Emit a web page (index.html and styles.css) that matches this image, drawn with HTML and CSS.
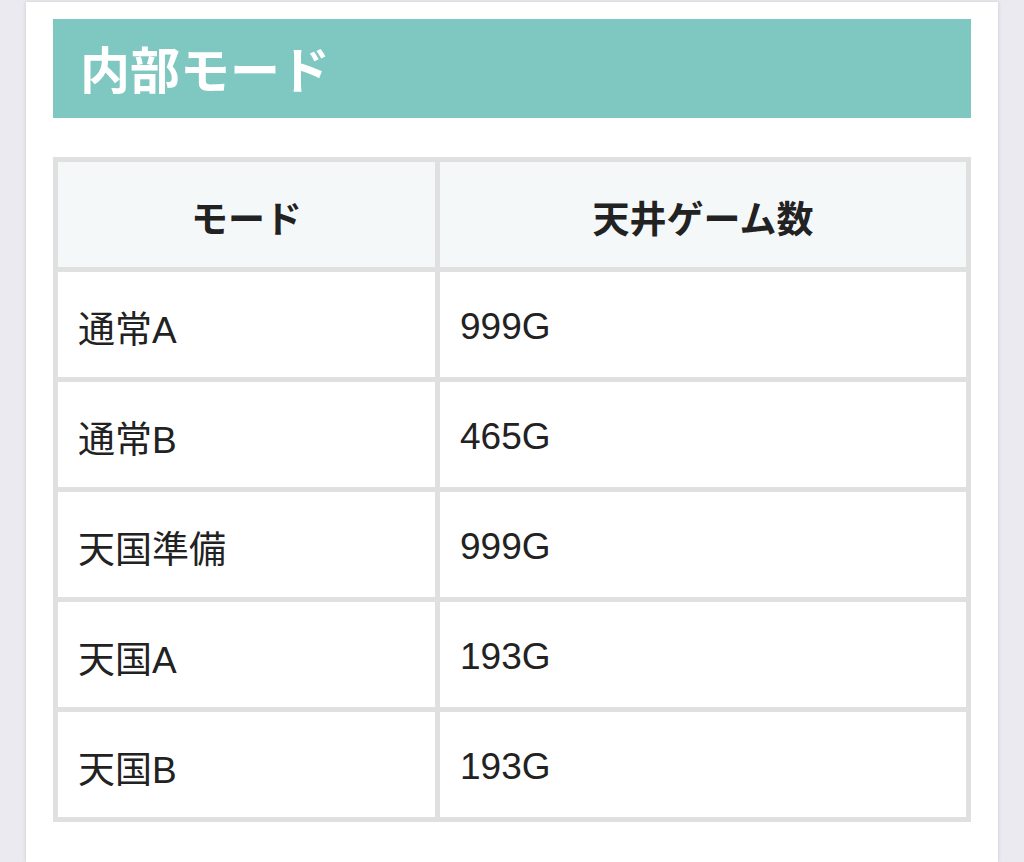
FILE: index.html
```html
<!DOCTYPE html>
<html lang="ja">
<head>
<meta charset="utf-8">
<title>内部モード</title>
<link rel="stylesheet" href="styles.css">
</head>
<body>
<main class="card">
  <h2 class="section-title">内部モード</h2>
  <table class="mode-table">
    <thead>
      <tr><th class="col-mode">モード</th><th class="col-games">天井ゲーム数</th></tr>
    </thead>
    <tbody>
      <tr><td>通常A</td><td>999G</td></tr>
      <tr><td>通常B</td><td>465G</td></tr>
      <tr><td>天国準備</td><td>999G</td></tr>
      <tr><td>天国A</td><td>193G</td></tr>
      <tr><td>天国B</td><td>193G</td></tr>
    </tbody>
  </table>
</main>
</body>
</html>
```

FILE: styles.css
```css
html, body {
  margin: 0;
  padding: 0;
}
body {
  background: #ebeaf0;
  font-family: "Liberation Sans", "Noto Sans CJK JP", sans-serif;
  color: #222;
  height: 862px;
  overflow: hidden;
}
.card {
  box-sizing: border-box;
  height: 860px;
  margin: 2px 26px 0 26px;
  background: #fff;
  padding: 17px 27px 0;
  box-shadow: 0 0 4px rgba(0, 0, 0, 0.14);
}
.section-title {
  margin: 0;
  height: 99px;
  display: flex;
  align-items: center;
  padding-left: 27px;
  padding-bottom: 4px;
  box-sizing: border-box;
  background: #7fc8c1;
  color: #fff;
  font-size: 50px;
  font-weight: bold;
}
.mode-table {
  margin-top: 39px;
  width: 100%;
  border-collapse: separate;
  border-spacing: 0;
  border-top: 5px solid #e0e0e0;
  border-left: 5px solid #e0e0e0;
  table-layout: fixed;
}
.mode-table th,
.mode-table td {
  border-right: 5px solid #e0e0e0;
  border-bottom: 5px solid #e0e0e0;
  height: 110px;
  padding: 4px 20px 0;
  font-size: 37px;
  box-sizing: border-box;
}
.mode-table th {
  background: #f5f8f9;
  font-weight: bold;
  text-align: center;
  color: #222;
}
.mode-table td {
  text-align: left;
  font-weight: normal;
}
.col-mode {
  width: 382px;
}
```
